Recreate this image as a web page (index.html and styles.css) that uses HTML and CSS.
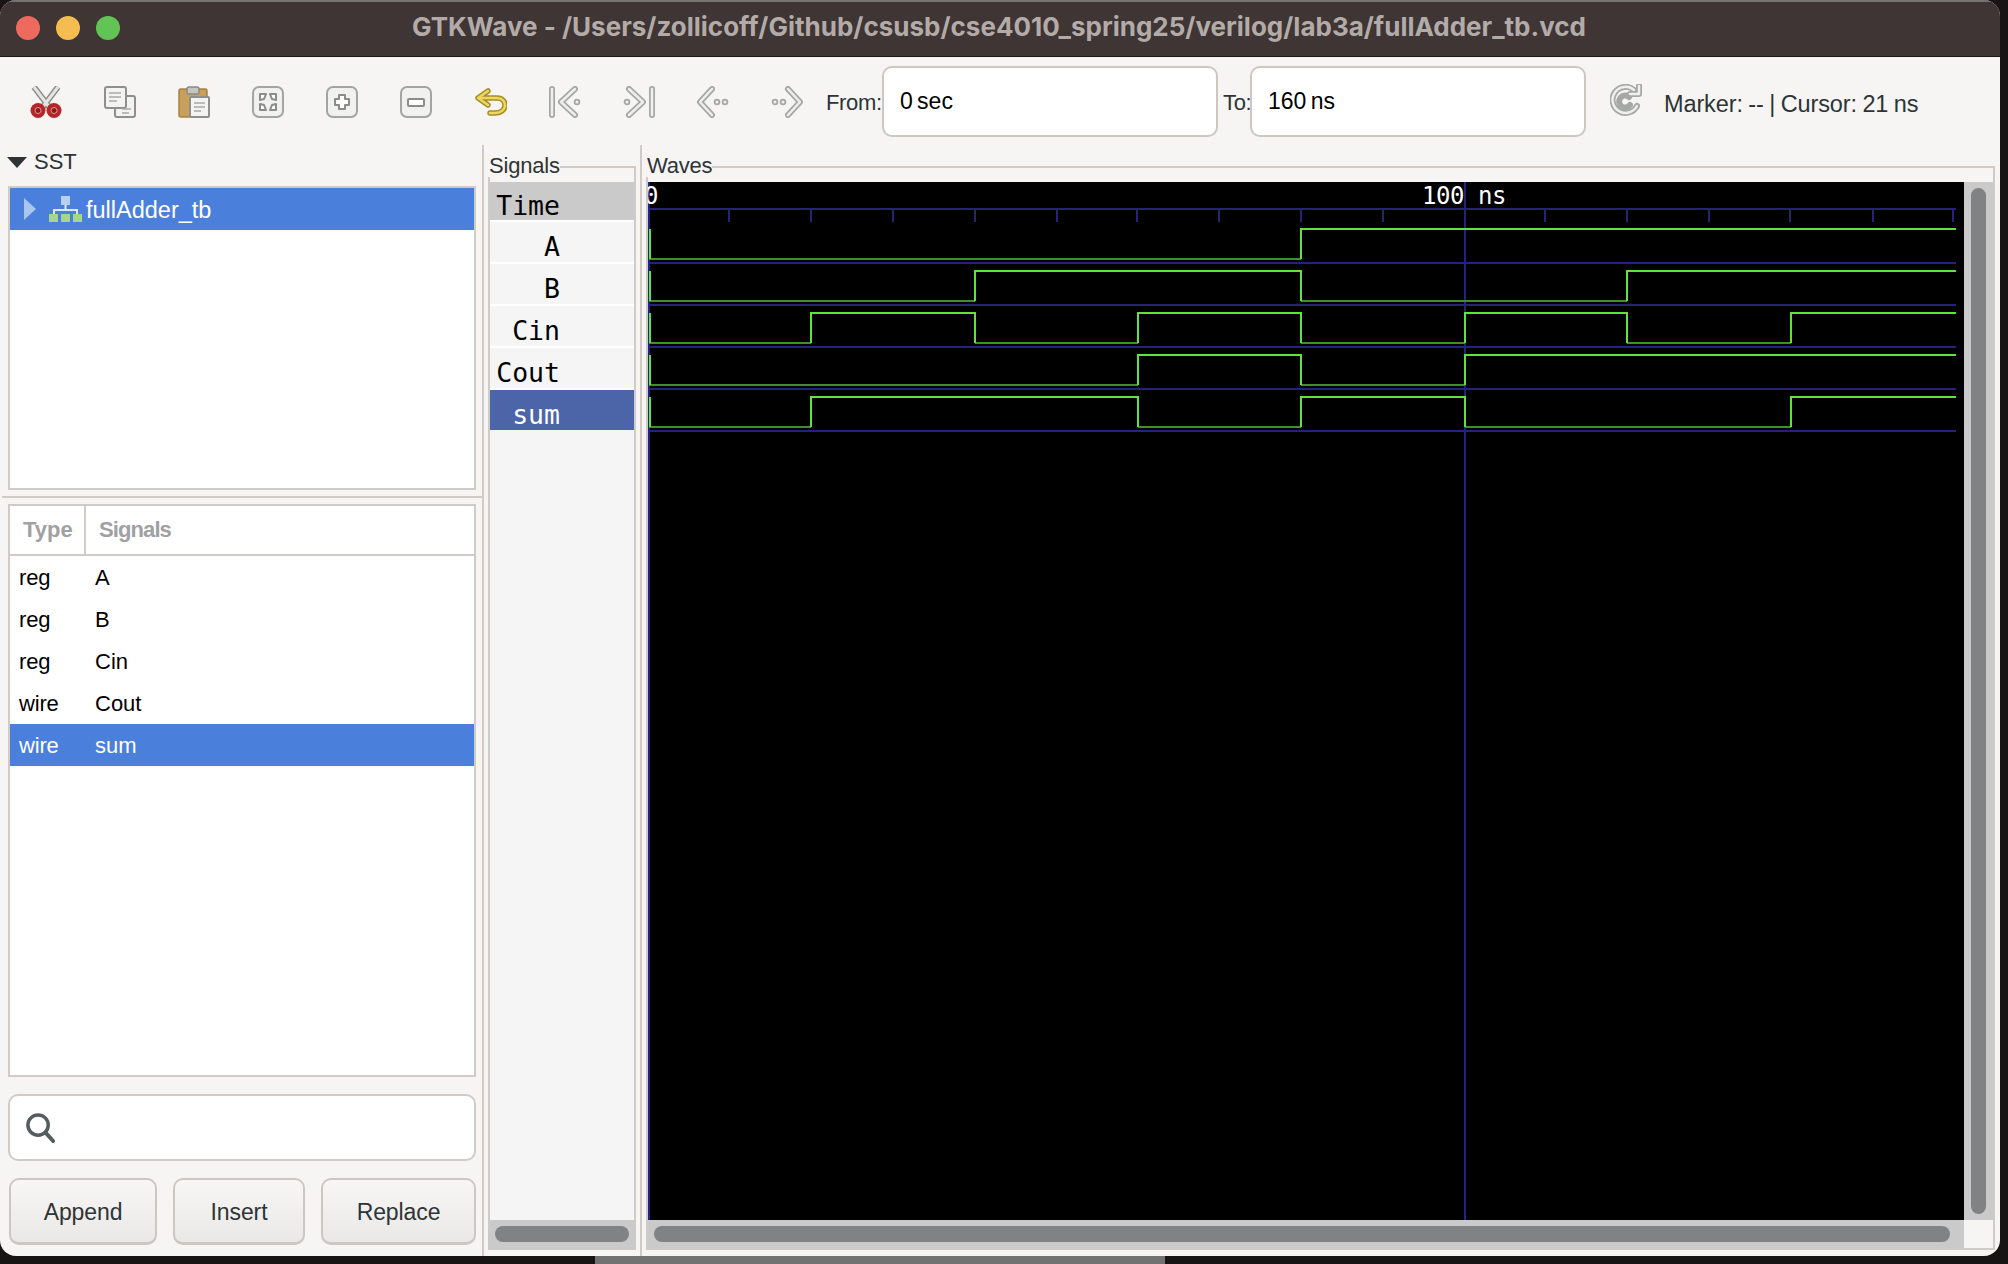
FILE: index.html
```html
<!DOCTYPE html>
<html lang="en">

<head>
    <meta charset="UTF-8">
    <meta name="viewport" content="width=device-width, initial-scale=1.0">
    <title>GTKWave</title>
    <link rel="stylesheet" href="styles.css">
</head>

<body>
    <div class="desk-strip"></div>
    <div class="window">
        <header class="titlebar">
            <div class="lights">
                <span class="light red"></span>
                <span class="light yellow"></span>
                <span class="light green"></span>
            </div>
            <div class="title">GTKWave - /Users/zollicoff/Github/csusb/cse4010_spring25/verilog/lab3a/fullAdder_tb.vcd</div>
        </header>

        <div class="toolbar">
            <div class="tools">
                <svg class="icon" viewBox="0 0 32 32">
                    <path d="M4 1 L20 22 M28 1 L12 22" class="blade"/>
                    <path d="M4 1 L20 22 M28 1 L12 22" class="blade-in"/>
                    <circle cx="8" cy="24.5" r="7.5" fill="#b5262a"/>
                    <circle cx="24" cy="24.5" r="7.5" fill="#b5262a"/>
                    <circle cx="8" cy="24.5" r="3" fill="#8c1a1d" stroke="#e09a9a" stroke-width="1"/>
                    <circle cx="24" cy="24.5" r="3" fill="#8c1a1d" stroke="#e09a9a" stroke-width="1"/>
                </svg>
                <svg class="icon" viewBox="0 0 32 32">
                    <rect x="11" y="10" width="20" height="21" rx="2" class="sheet"/>
                    <rect x="1" y="1" width="21" height="21" rx="2" class="sheet"/>
                    <path d="M5 7h12M5 11h12M5 15h8M18 23h9M18 27h7" class="lines"/>
                </svg>
                <svg class="icon" viewBox="0 0 32 32">
                    <rect x="1" y="3" width="28" height="28" rx="2" fill="#c99f5e" stroke="#a8823f" stroke-width="1.5"/>
                    <rect x="9" y="1" width="12" height="7" rx="2" fill="#c4c4c2" stroke="#888a85" stroke-width="1.5"/>
                    <rect x="12" y="11" width="19" height="20" rx="1" class="sheet"/>
                    <path d="M16 17h11M16 21h11M16 25h7" class="lines"/>
                </svg>
                <svg class="icon" viewBox="0 0 32 32">
                    <rect x="1" y="1" width="30" height="30" rx="6" class="btn-sq"/>
                    <path d="M8 8h6l-2 5-4 1zM24 8h-6l2 5 4 1zM8 24h6l-2-5-4-1zM24 24h-6l2-5 4-1z" class="mark"/>
                </svg>
                <svg class="icon" viewBox="0 0 32 32">
                    <rect x="1" y="1" width="30" height="30" rx="6" class="btn-sq"/>
                    <path d="M13 9h6v4h4v6h-4v4h-6v-4h-4v-6h4z" class="mark"/>
                </svg>
                <svg class="icon" viewBox="0 0 32 32">
                    <rect x="1" y="1" width="30" height="30" rx="6" class="btn-sq"/>
                    <rect x="8" y="13" width="16" height="7" rx="1" class="mark"/>
                </svg>
                <svg class="icon" viewBox="0 0 32 32">
                    <path d="M13 5 L3 12 L13 19 M4 12 H22 C33 12 33 27 20 27 H15" fill="none" stroke="#a88f1c" stroke-width="5.5" stroke-linecap="round" stroke-linejoin="round"/>
                    <path d="M13 5 L3 12 L13 19 M4 12 H22 C33 12 33 27 20 27 H15" fill="none" stroke="#ecd766" stroke-width="2.5" stroke-linecap="round" stroke-linejoin="round"/>
                </svg>
                <svg class="icon" viewBox="0 0 32 32">
                    <path d="M3 3V29M26 3L12 16L26 29" class="nav"/>
                    <path d="M3 3V29M26 3L12 16L26 29" class="nav-in"/>
                    <circle cx="28" cy="16" r="2.4" class="dot"/>
                </svg>
                <svg class="icon" viewBox="0 0 32 32">
                    <path d="M29 3V29M6 3L20 16L6 29" class="nav"/>
                    <path d="M29 3V29M6 3L20 16L6 29" class="nav-in"/>
                    <circle cx="4" cy="16" r="2.4" class="dot"/>
                </svg>
                <svg class="icon" viewBox="0 0 32 32">
                    <path d="M15 3L3 16L15 29" class="nav"/>
                    <path d="M15 3L3 16L15 29" class="nav-in"/>
                    <circle cx="20" cy="16" r="2.4" class="dot"/>
                    <circle cx="28" cy="16" r="2.4" class="dot"/>
                </svg>
                <svg class="icon" viewBox="0 0 32 32">
                    <path d="M17 3L29 16L17 29" class="nav"/>
                    <path d="M17 3L29 16L17 29" class="nav-in"/>
                    <circle cx="4" cy="16" r="2.4" class="dot"/>
                    <circle cx="12" cy="16" r="2.4" class="dot"/>
                </svg>
            </div>
            <span class="range-label from-label">From:</span>
            <div class="range-input">0 sec</div>
            <span class="range-label to-label">To:</span>
            <div class="range-input">160 ns</div>
            <svg class="icon reload" viewBox="0 0 32 32">
                <path d="M24 6A13 13 0 1 0 27 22" class="nav"/>
                <path d="M24 6A13 13 0 1 0 27 22" class="nav-in"/>
                <path d="M19 13A6 6 0 1 0 20 21" class="nav"/>
                <path d="M20 10H29V2" class="nav"/>
                <path d="M20 10H29V2" class="nav-in"/>
            </svg>
            <span class="status">Marker: -- | Cursor: 21 ns</span>
        </div>

        <main class="panes">
            <section class="left">
                <div class="sst-head">
                    <span class="down-arrow"></span>
                    <span>SST</span>
                </div>
                <div class="tree">
                    <div class="tree-row">
                        <span class="right-arrow"></span>
                        <svg class="tree-icon" viewBox="0 0 33 26">
                            <rect x="12" y="0" width="9" height="9" fill="#b9cff0"/>
                            <path d="M16.5 9V14M5 18V14H28V18" fill="none" stroke="#dfe7f5" stroke-width="2"/>
                            <rect x="0" y="18" width="9" height="8" fill="#a5d68e"/>
                            <rect x="12" y="18" width="9" height="8" fill="#a5d68e"/>
                            <rect x="24" y="18" width="9" height="8" fill="#a5d68e"/>
                        </svg>
                        <span class="tree-name">fullAdder_tb</span>
                    </div>
                </div>
                <div class="handle"><div class="handle-line"></div></div>
                <div class="signal-box">
                    <div class="signal-head">
                        <span class="col-type">Type</span>
                        <span class="col-sig">Signals</span>
                    </div>
                    <div class="signal-row"><span class="cell-type">reg</span><span>A</span></div>
                    <div class="signal-row"><span class="cell-type">reg</span><span>B</span></div>
                    <div class="signal-row"><span class="cell-type">reg</span><span>Cin</span></div>
                    <div class="signal-row"><span class="cell-type">wire</span><span>Cout</span></div>
                    <div class="signal-row selected"><span class="cell-type">wire</span><span>sum</span></div>
                </div>
                <div class="search">
                    <svg class="search-icon" viewBox="0 0 32 32">
                        <circle cx="13.5" cy="13.5" r="10.5" fill="none" stroke="#565d5f" stroke-width="3.6"/>
                        <path d="M21 21L29 30" stroke="#565d5f" stroke-width="4" stroke-linecap="round"/>
                    </svg>
                </div>
                <div class="actions">
                    <button class="act act-append">Append</button>
                    <button class="act act-insert">Insert</button>
                    <button class="act act-replace">Replace</button>
                </div>
            </section>

            <section class="signals-pane">
                <div class="frame-title">
                    <span>Signals</span>
                </div>
                <div class="signals-body">
                    <div class="names">
                        <div class="name time"><span>Time</span></div>
                        <div class="name"><span>A</span></div>
                        <div class="name"><span>B</span></div>
                        <div class="name"><span>Cin</span></div>
                        <div class="name"><span>Cout</span></div>
                        <div class="name sel"><span>sum</span></div>
                    </div>
                    <div class="hscroll"><div class="thumb"></div></div>
                </div>
            </section>

            <section class="waves-pane">
                <div class="frame-title">
                    <span>Waves</span>
                </div>
                <div class="waves-body">
                    <svg class="wave-canvas" viewBox="648 182 1316 1038">
                        <rect x="648" y="182" width="1316" height="1038" fill="#000"/>
                        <path class="grid" d="M649 182V1220M1465 182V1220"/>
                        <path class="grid" d="M649 209H1956M649 263H1956M649 305H1956M649 347H1956M649 389H1956M649 431H1956"/>
                        <path class="grid" d="M729 209V222M811 209V222M893 209V222M975 209V222M1057 209V222M1137 209V222M1219 209V222M1301 209V222M1383 209V222M1545 209V222M1627 209V222M1709 209V222M1790 209V222M1873 209V222M1953 209V222"/>
                        <text class="ruler" x="644" y="204">0</text>
                        <text class="ruler" x="1422" y="204">100</text>
                        <text class="ruler" x="1478" y="204">ns</text>

                        <!-- low parts dark, high parts and edges bright -->
                        <path class="low" d="M649 259H1301"/>
                        <path class="high" d="M650 229V259M1301 259V229H1956"/>

                        <path class="low" d="M649 301H975M1301 301H1627"/>
                        <path class="high" d="M650 271V301M975 301V271H1301V301M1627 301V271H1956"/>

                        <path class="low" d="M649 343H811M975 343H1138M1301 343H1465M1627 343H1791"/>
                        <path class="high" d="M650 313V343M811 343V313H975V343M1138 343V313H1301V343M1465 343V313H1627V343M1791 343V313H1956"/>

                        <path class="low" d="M649 385H1138M1301 385H1465"/>
                        <path class="high" d="M650 355V385M1138 385V355H1301V385M1465 385V355H1956"/>

                        <path class="low" d="M649 427H811M1138 427H1301M1465 427H1791"/>
                        <path class="high" d="M650 397V427M811 427V397H1138V427M1301 427V397H1465V427M1791 427V397H1956"/>
                    </svg>
                    <div class="vscroll"><div class="thumb"></div></div>
                    <div class="hscroll wave-h"><div class="thumb"></div></div>
                    <div class="corner"></div>
                </div>
            </section>
        </main>
    </div>
</body>

</html>
```

FILE: styles.css
```css
* {
    box-sizing: border-box;
}

html, body {
    margin: 0;
    padding: 0;
    height: 100%;
    overflow: hidden;
}

body {
    position: relative;
    width: 2008px;
    height: 1264px;
    background-color: #171413;
    font-family: "Liberation Sans", Arial, sans-serif;
    color: #2e3436;
}

.desk-strip {
    position: absolute;
    left: 595px;
    bottom: 0;
    width: 570px;
    height: 8px;
    background-color: #727272;
}

.window {
    position: relative;
    width: 2000px;
    height: 1256px;
    display: flex;
    flex-direction: column;
    background-color: #f6f5f4;
    border-radius: 16px;
    overflow: hidden;
}

/* title bar */
.titlebar {
    height: 57px;
    flex: none;
    position: relative;
    display: flex;
    align-items: center;
    justify-content: center;
    background-color: #3e3534;
    border-top: 2px solid #77716f;
    border-bottom: 1px solid #1e1a19;
}

.lights {
    position: absolute;
    left: 16px;
    top: 14px;
    display: flex;
    gap: 16px;
}

.light {
    width: 24px;
    height: 24px;
    border-radius: 50%;
}

.red { background-color: #ee6a5f; }
.yellow { background-color: #f5bd4f; }
.green { background-color: #61c454; }

.title {
    font-family: Inter, "Liberation Sans", sans-serif;
    font-size: 26px;
    font-weight: 700;
    color: #b3aba8;
    white-space: nowrap;
    margin-right: 2px;
    margin-top: -5px;
}

/* toolbar */
.toolbar {
    height: 88px;
    flex: none;
    display: flex;
    align-items: center;
    padding-left: 30px;
}

.tools {
    display: flex;
    gap: 42.1px;
    margin-top: 2px;
}

.icon {
    width: 32px;
    height: 32px;
    flex: none;
    filter: blur(0.6px);
}

.blade { fill: none; stroke: #8a8c88; stroke-width: 6; }
.blade-in { fill: none; stroke: #e4e4e2; stroke-width: 3; }
.sheet { fill: #f3f3f1; stroke: #8e908c; stroke-width: 2; }
.lines { fill: none; stroke: #a9aba7; stroke-width: 1.6; }
.btn-sq { fill: #f1f1ef; stroke: #a3a5a1; stroke-width: 2; }
.mark { fill: #fff; stroke: #8a8c88; stroke-width: 2; stroke-linejoin: round; }
.nav { fill: none; stroke: #a6a8a5; stroke-width: 6; stroke-linecap: round; stroke-linejoin: round; }
.nav-in { fill: none; stroke: #efefed; stroke-width: 2.5; stroke-linecap: round; stroke-linejoin: round; }
.dot { fill: #eeeeec; stroke: #a6a8a5; stroke-width: 1.8; }

.range-label {
    font-size: 22px;
    letter-spacing: -0.3px;
    margin-top: 3px;
}

.from-label {
    margin-left: 23px;
    width: 56px;
}

.to-label {
    width: 32px;
    padding-left: 5px;
}

.range-input {
    width: 336px;
    height: 71px;
    margin-top: 1px;
    padding-left: 16px;
    display: flex;
    align-items: center;
    background-color: #fff;
    border: 2px solid #cdc7c2;
    border-radius: 10px;
    font-size: 23px;
    color: #000;
    word-spacing: -2px;
}

.reload {
    margin-left: 24px;
    margin-top: -2px;
}

.status {
    margin-left: 22px;
    margin-top: 6px;
    font-size: 23.5px;
    letter-spacing: -0.1px;
    word-spacing: -1px;
    white-space: nowrap;
}

/* panes */
.panes {
    flex: 1;
    display: flex;
    min-height: 0;
}

.left {
    width: 482px;
    flex: none;
    padding-left: 8px;
    padding-right: 6px;
    display: flex;
    flex-direction: column;
}

.sst-head {
    height: 41px;
    flex: none;
    padding-bottom: 7px;
    display: flex;
    align-items: center;
    gap: 7px;
    font-size: 22px;
    margin-left: -1px;
}

.down-arrow {
    width: 0;
    height: 0;
    border-left: 10px solid transparent;
    border-right: 10px solid transparent;
    border-top: 11px solid #2e3436;
}

.tree {
    height: 304px;
    background-color: #fff;
    border: 2px solid #d0cbc6;
    flex: none;
}

.tree-row {
    height: 42px;
    display: flex;
    align-items: center;
    background-color: #4a80dc;
    color: #fff;
    padding-left: 14px;
}

.right-arrow {
    width: 0;
    height: 0;
    border-top: 11px solid transparent;
    border-bottom: 11px solid transparent;
    border-left: 12px solid #a9c5f0;
}

.tree-icon {
    width: 33px;
    height: 26px;
    margin-left: 13px;
    filter: blur(0.5px);
}

.tree-name {
    font-size: 23.5px;
    margin-left: 4px;
    padding-top: 2px;
}

.handle {
    height: 14px;
    flex: none;
    margin-left: -6px;
    margin-right: -6px;
    padding-top: 6px;
}

.handle-line {
    height: 2px;
    background-color: #d0cbc6;
}

.signal-box {
    height: 573px;
    flex: none;
    background-color: #fff;
    border: 2px solid #d0cbc6;
    font-size: 22px;
    color: #000;
}

.signal-head {
    height: 50px;
    display: flex;
    align-items: center;
    border-bottom: 2px solid #d0cbc6;
    font-weight: bold;
    color: #9fa1a3;
    letter-spacing: -0.9px;
}

.col-type {
    width: 76px;
    height: 100%;
    display: flex;
    align-items: center;
    padding-left: 13px;
    border-right: 2px solid #d0cbc6;
    letter-spacing: 0;
}

.col-sig {
    padding-left: 13px;
}

.signal-row {
    height: 42px;
    display: flex;
    align-items: center;
    padding-left: 9px;
    padding-top: 2px;
}

.cell-type {
    width: 76px;
    letter-spacing: -0.2px;
}

.signal-row.selected {
    background-color: #4a80dc;
    color: #fff;
}

.search {
    height: 67px;
    margin-top: 17px;
    flex: none;
    display: flex;
    align-items: center;
    padding-left: 15px;
    background-color: #fff;
    border: 2px solid #d0cbc6;
    border-radius: 10px;
}

.search-icon {
    width: 31px;
    height: 31px;
    filter: blur(0.6px);
}

.actions {
    display: flex;
    margin-top: 17px;
    padding-left: 1px;
    gap: 16px;
}

.act {
    height: 67px;
    background: linear-gradient(#f8f7f6, #e9e8e7);
    border: 2px solid #cdc7c2;
    border-bottom-width: 3px;
    border-radius: 10px;
    font-family: inherit;
    font-size: 23px;
    letter-spacing: -0.1px;
    color: #2e3436;
    padding: 2px 0 0;
}

.act-append { width: 148px; }
.act-insert { width: 132px; }
.act-replace { width: 155px; }

/* signals and waves frames */
.signals-pane {
    width: 158px;
    flex: none;
    border-left: 2px solid #d0cbc6;
    padding-left: 4px;
    padding-right: 4px;
    padding-bottom: 6px;
    display: flex;
    flex-direction: column;
}

.frame-title {
    height: 32px;
    flex: none;
    display: flex;
    font-size: 22px;
    letter-spacing: -0.2px;
}

.frame-title span {
    line-height: 24px;
    margin-top: 9px;
    padding-left: 1px;
}

.frame-title::after {
    content: "";
    flex: 1;
    height: 11px;
    margin-top: 21px;
    border-top: 2px solid #d0cbc6;
    border-right: 2px solid #d0cbc6;
}

.signals-body {
    flex: 1;
    min-height: 0;
    display: flex;
    flex-direction: column;
    border-left: 2px solid #d0cbc6;
    border-right: 2px solid #d0cbc6;
    padding-top: 5px;
}

.names {
    flex: 1;
    background-color: #f5f5f5;
    font-family: "DejaVu Sans Mono", monospace;
    font-size: 26.5px;
    color: #000;
}

.name {
    height: 42px;
    display: flex;
    align-items: center;
    justify-content: flex-end;
    padding-right: 74px;
    padding-top: 9px;
    border-bottom: 2px solid #fff;
}

.name.time {
    height: 40px;
    background-color: #cacaca;
}

.name.sel {
    height: 40px;
    background-color: #4c65a8;
    color: #fff;
    border-bottom: 0;
}

.hscroll {
    height: 30px;
    flex: none;
    margin-left: -2px;
    margin-right: -2px;
    padding: 6px 7px 8px;
    background-color: #cacaca;
}

.thumb {
    width: 100%;
    height: 100%;
    background-color: #808284;
    border-radius: 8px;
}

.waves-pane {
    flex: 1;
    min-width: 0;
    border-left: 2px solid #d0cbc6;
    padding-left: 4px;
    padding-right: 5px;
    padding-bottom: 6px;
    display: flex;
    flex-direction: column;
}

.waves-body {
    flex: 1;
    min-height: 0;
    display: grid;
    grid-template-columns: 1316px 1fr;
    grid-template-rows: 1038px 1fr;
    padding-top: 5px;
    border-left: 2px solid #d0cbc6;
    border-right: 2px solid #d0cbc6;
    border-bottom: 2px solid #d0cbc6;
}

.wave-canvas {
    width: 1316px;
    height: 1038px;
    display: block;
}

.grid {
    fill: none;
    stroke: #23237a;
    stroke-width: 2;
}

.ruler {
    fill: #fff;
    font-family: "DejaVu Sans Mono", monospace;
    font-size: 24px;
    letter-spacing: -0.5px;
}

.low {
    fill: none;
    stroke: #3f8f2a;
    stroke-width: 2;
}

.high {
    fill: none;
    stroke: #5fe43c;
    stroke-width: 2;
}

.vscroll {
    padding: 6px 7px;
    background-color: #cacaca;
}

.wave-h {
    height: auto;
    margin: 0;
    padding: 6px 14px 6px 6px;
}

.corner {
    background-color: #f6f5f4;
}
```
